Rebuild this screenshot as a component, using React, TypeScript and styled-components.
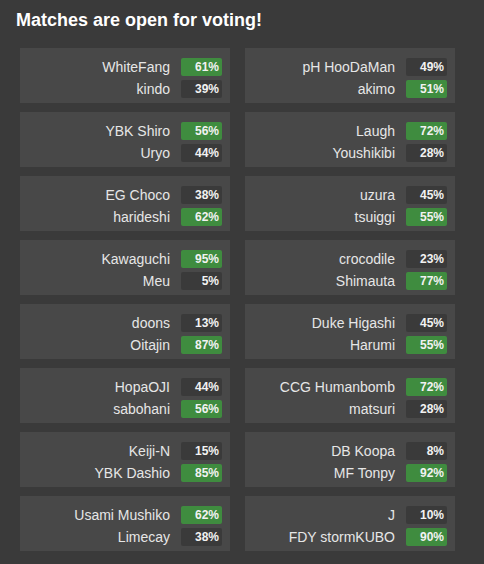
import React from "react";
import styled, { createGlobalStyle } from "styled-components";

type Player = { name: string; pct: number };
type Match = [Player, Player];

const matches: Match[] = [
  [{ name: "WhiteFang", pct: 61 }, { name: "kindo", pct: 39 }],
  [{ name: "pH HooDaMan", pct: 49 }, { name: "akimo", pct: 51 }],
  [{ name: "YBK Shiro", pct: 56 }, { name: "Uryo", pct: 44 }],
  [{ name: "Laugh", pct: 72 }, { name: "Youshikibi", pct: 28 }],
  [{ name: "EG Choco", pct: 38 }, { name: "harideshi", pct: 62 }],
  [{ name: "uzura", pct: 45 }, { name: "tsuiggi", pct: 55 }],
  [{ name: "Kawaguchi", pct: 95 }, { name: "Meu", pct: 5 }],
  [{ name: "crocodile", pct: 23 }, { name: "Shimauta", pct: 77 }],
  [{ name: "doons", pct: 13 }, { name: "Oitajin", pct: 87 }],
  [{ name: "Duke Higashi", pct: 45 }, { name: "Harumi", pct: 55 }],
  [{ name: "HopaOJI", pct: 44 }, { name: "sabohani", pct: 56 }],
  [{ name: "CCG Humanbomb", pct: 72 }, { name: "matsuri", pct: 28 }],
  [{ name: "Keiji-N", pct: 15 }, { name: "YBK Dashio", pct: 85 }],
  [{ name: "DB Koopa", pct: 8 }, { name: "MF Tonpy", pct: 92 }],
  [{ name: "Usami Mushiko", pct: 62 }, { name: "Limecay", pct: 38 }],
  [{ name: "J", pct: 10 }, { name: "FDY stormKUBO", pct: 90 }],
];

function App() {
  return (
    <>
      <GlobalStyle />
      <Page>
        <Title>Matches are open for voting!</Title>
        <Grid>
          {matches.map((m, i) => {
            // the player with the larger share gets the green badge
            const top = Math.max(m[0].pct, m[1].pct);
            return (
              <Card key={i}>
                {m.map((p) => (
                  <Row key={p.name}>
                    <Name>{p.name}</Name>
                    <Badge $win={p.pct === top}>{p.pct}%</Badge>
                  </Row>
                ))}
              </Card>
            );
          })}
        </Grid>
      </Page>
    </>
  );
}

const GlobalStyle = createGlobalStyle`
  html, body {
    margin: 0;
    background: #3a3a3a;
  }
  body {
    font-family: "Liberation Sans", Arial, sans-serif;
  }
`;

const Page = styled.div`
  width: 484px;
  height: 564px;
  background: #3a3a3a;
  padding: 9px 0 0 16px;
  box-sizing: border-box;
  overflow: hidden;
`;

const Title = styled.h1`
  margin: 0;
  font-size: 18px;
  line-height: 22px;
  font-weight: bold;
  color: #ffffff;
`;

const Grid = styled.div`
  display: grid;
  grid-template-columns: 210px 210px;
  column-gap: 15px;
  row-gap: 9px;
  margin: 17px 0 0 4px;
`;

const Card = styled.div`
  background: #484848;
  height: 55px;
  box-sizing: border-box;
  padding: 10px 8px 0 0;
  display: flex;
  flex-direction: column;
  gap: 4px;
`;

const Row = styled.div`
  display: flex;
  justify-content: flex-end;
  align-items: center;
  height: 18px;
  gap: 11px;
`;

const Name = styled.span`
  font-size: 14px;
  color: #e6e6e6;
  white-space: nowrap;
`;

const Badge = styled.span<{ $win: boolean }>`
  width: 41px;
  height: 18px;
  box-sizing: border-box;
  padding-right: 3px;
  border-radius: 2px;
  background: ${({ $win }) => ($win ? "#3f8c3f" : "#3a3a3a")};
  color: #f2f2f2;
  font-size: 12px;
  font-weight: bold;
  line-height: 18px;
  text-align: right;
`;

export default App;
